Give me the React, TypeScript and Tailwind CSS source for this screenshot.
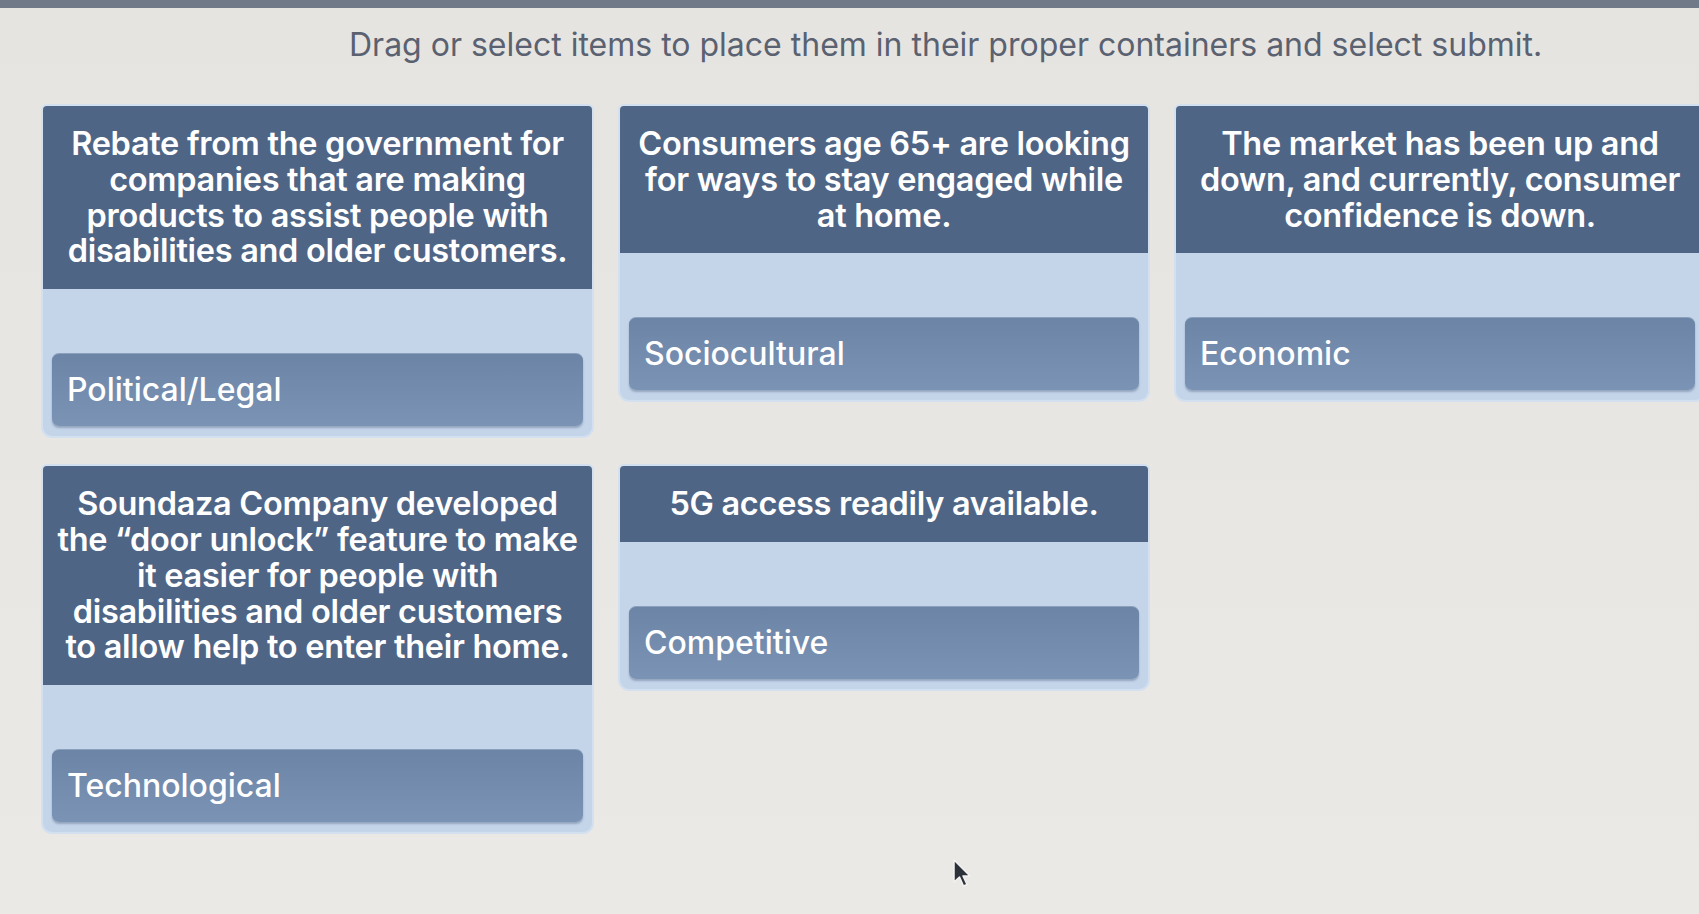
import React from 'react';

type Item = { prompt: string[]; answer: string };

const rowOne: Item[] = [
  {
    prompt: [
      'Rebate from the government for',
      'companies that are making',
      'products to assist people with',
      'disabilities and older customers.',
    ],
    answer: 'Political/Legal',
  },
  {
    prompt: ['Consumers age 65+ are looking', 'for ways to stay engaged while', 'at home.'],
    answer: 'Sociocultural',
  },
  {
    prompt: ['The market has been up and', 'down, and currently, consumer', 'confidence is down.'],
    answer: 'Economic',
  },
];

const rowTwo: Item[] = [
  {
    prompt: [
      'Soundaza Company developed',
      'the \u201cdoor unlock\u201d feature to make',
      'it easier for people with',
      'disabilities and older customers',
      'to allow help to enter their home.',
    ],
    answer: 'Technological',
  },
  {
    prompt: ['5G access readily available.'],
    answer: 'Competitive',
  },
];

function DropCard({ item }: { item: Item }) {
  return (
    <div className="flex flex-col rounded-b-[9px] rounded-t-[4px] bg-[#c4d5ea] shadow-[0_0_0_2px_#d3e0f0]">
      {/* prompt header */}
      <div className="rounded-t-[4px] bg-[#4f6586] px-2 py-[20px] text-center text-[32.5px] font-semibold leading-[35.8px] tracking-[-0.3px] text-white whitespace-nowrap">
        {item.prompt.map((line, i) => (
          <div key={i}>{line}</div>
        ))}
      </div>

      {/* drop zone with placed chip */}
      <div className="px-[9px] pt-[64px] pb-[10px]">
        <div className="flex h-[73px] items-center rounded-[7px] border-t border-[#8aa0bd] bg-gradient-to-b from-[#6c84a6] to-[#7b93b4] px-[15px] text-[32px] font-medium text-white shadow-[0_2px_2px_rgba(60,80,110,0.35)]">
          {item.answer}
        </div>
      </div>
    </div>
  );
}

export default function App() {
  return (
    <div
      className="relative h-[914px] w-[1699px] overflow-hidden bg-gradient-to-b from-[#e6e4e0] to-[#ebe9e5]"
      style={{ fontFamily: 'Inter, "Noto Sans", sans-serif' }}
    >
      {/* top strip of the screen */}
      <div className="h-[8px] bg-[#6f7988]" />

      <div className="pl-[349px] pt-[15px] text-[32px] leading-[44px] text-[#5a6171] whitespace-nowrap">
        Drag or select items to place them in their proper containers and select submit.
      </div>

      <div className="mt-[39px] grid grid-cols-[549px_528px_528px] items-start gap-x-[28px] gap-y-[30px] pl-[43px]">
        {rowOne.map((item) => (
          <DropCard key={item.answer} item={item} />
        ))}
        {rowTwo.map((item) => (
          <DropCard key={item.answer} item={item} />
        ))}
      </div>

      {/* mouse pointer */}
      <svg
        className="absolute left-[952px] top-[858px]"
        width="22"
        height="32"
        viewBox="0 0 22 32"
      >
        <path
          d="M2 2 L2 24 L7.5 19 L11.5 28 L15 26.5 L11 18 L18 18 Z"
          fill="#2d3139"
          stroke="#f2f2f2"
          strokeWidth="1.5"
          strokeLinejoin="round"
        />
      </svg>
    </div>
  );
}
